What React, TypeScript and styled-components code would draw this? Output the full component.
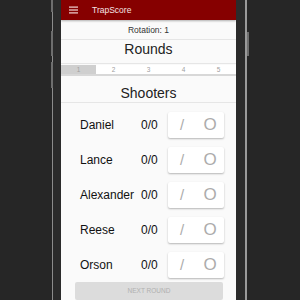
import styled, { createGlobalStyle } from "styled-components";

const GlobalStyle = createGlobalStyle`
  html, body {
    margin: 0;
    padding: 0;
    background: #262626;
    font-family: "Liberation Sans", Arial, sans-serif;
  }
`;

const shooters = ["Daniel", "Lance", "Alexander", "Reese", "Orson"];
const rounds = [1, 2, 3, 4, 5];

const App = () => {
  return (
    <Page>
      <GlobalStyle />
      <Phone>
        <SideButton side="left" top={0} height={12} />
        <SideButton side="left" top={31} height={25} />
        <SideButton side="left" top={62} height={26} />
        <SideButton side="right" top={32} height={24} />
        <Screen>
          <Header>
            <MenuIcon width="9" height="8" viewBox="0 0 9 8">
              <rect x="0" y="0.5" width="9" height="1.2" fill="#f2d6d6" />
              <rect x="0" y="3.4" width="9" height="1.2" fill="#f2d6d6" />
              <rect x="0" y="6.3" width="9" height="1.2" fill="#f2d6d6" />
            </MenuIcon>
            <Title>TrapScore</Title>
          </Header>
          <Rotation>Rotation: 1</Rotation>
          <SectionTitle>Rounds</SectionTitle>
          <Tabs>
            {rounds.map((r) => (
              <Tab key={r} active={r === 1}>
                {r}
              </Tab>
            ))}
          </Tabs>
          <ShootersTitle>Shooters</ShootersTitle>
          <List>
            {shooters.map((name) => (
              <Row key={name}>
                <Name>{name}</Name>
                <Score>0/0</Score>
                <ShotBox>
                  <ShotButton>/</ShotButton>
                  <ShotButton big>O</ShotButton>
                </ShotBox>
              </Row>
            ))}
          </List>
          <NextButton>NEXT ROUND</NextButton>
        </Screen>
      </Phone>
    </Page>
  );
};

const Page = styled.div`
  display: flex;
  height: 300px;
  overflow: hidden;
  background: #262626;
`;

const Phone = styled.div`
  position: relative;
  margin-left: 52px;
  width: 175px;
  height: 300px;
  padding: 0 9px 0 8px;
  border-left: 1px solid #8c8c8c;
  border-right: 2px solid #9a9a9a;
  background: #2b2b2b;
`;

const SideButton = styled.div<{ side: "left" | "right"; top: number; height: number }>`
  position: absolute;
  ${({ side }) => (side === "left" ? "left: -2px;" : "right: -4px;")}
  top: ${({ top }) => top}px;
  width: 2px;
  height: ${({ height }) => height}px;
  background: #6e6e6e;
`;

const Screen = styled.div`
  display: flex;
  flex-direction: column;
  width: 175px;
  height: 300px;
  background: #fafafa;
  overflow: hidden;
`;

const Header = styled.div`
  position: relative;
  display: flex;
  align-items: center;
  height: 20px;
  padding-left: 8px;
  background: #860000;
  box-shadow: 0 1px 2px rgba(0, 0, 0, 0.3);
`;

const MenuIcon = styled.svg`
  display: block;
`;

const Title = styled.span`
  margin-left: 14px;
  color: #f4e4e4;
  font-size: 8.5px;
`;

const Rotation = styled.div`
  height: 19px;
  line-height: 20px;
  text-align: center;
  font-size: 8.5px;
  color: #333;
  border-bottom: 1px solid #e6e6e6;
`;

const SectionTitle = styled.div`
  height: 24px;
  padding-top: 1px;
  line-height: 16px;
  box-sizing: border-box;
  text-align: center;
  font-size: 14px;
  color: #222;
  border-bottom: 1px solid #e6e6e6;
  margin-bottom: 1px;
`;

const Tabs = styled.div`
  display: flex;
  height: 9px;
  background: #fff;
  border-bottom: 2px solid #d8d8d8;
`;

const Tab = styled.div<{ active?: boolean }>`
  flex: 1;
  display: flex;
  align-items: center;
  justify-content: center;
  font-size: 6.5px;
  color: #a0a0a0;
  background: ${({ active }) => (active ? "#cfcfcf" : "#fff")};
`;

const ShootersTitle = styled.div`
  height: 27px;
  padding-top: 9px;
  line-height: 16px;
  box-sizing: border-box;
  text-align: center;
  font-size: 14px;
  color: #222;
  border-bottom: 1px solid #e6e6e6;
`;

const List = styled.div`
  display: flex;
  flex-direction: column;
  padding-top: 4px;
`;

const Row = styled.div`
  display: flex;
  align-items: center;
  height: 35px;
  padding-left: 19px;
`;

const Name = styled.span`
  width: 61px;
  font-size: 12px;
  color: #111;
`;

const Score = styled.span`
  width: 27px;
  font-size: 12px;
  color: #111;
`;

const ShotBox = styled.div`
  display: flex;
  width: 56px;
  height: 26px;
  background: #fff;
  border-radius: 2px;
  box-shadow: 0 1px 2px rgba(0, 0, 0, 0.28);
`;

const ShotButton = styled.div<{ big?: boolean }>`
  flex: 1;
  display: flex;
  align-items: center;
  justify-content: center;
  font-size: ${({ big }) => (big ? 17 : 15)}px;
  color: #acacac;
`;

const NextButton = styled.div`
  margin: 0 13px 0 14px;
  height: 18px;
  line-height: 17px;
  text-align: center;
  font-size: 6.5px;
  color: #b0b0b0;
  background: #dcdcdc;
  border-radius: 2px;
`;

export default App;
